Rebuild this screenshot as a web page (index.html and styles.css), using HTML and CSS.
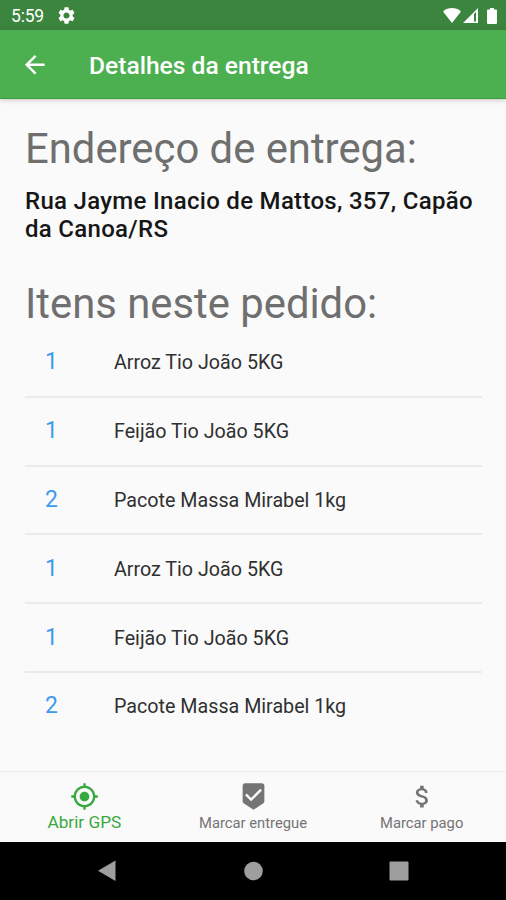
FILE: index.html
```html
<!DOCTYPE html>
<html lang="pt-BR">
<head>
<meta charset="utf-8">
<title>Detalhes da entrega</title>
<link rel="stylesheet" href="styles.css">
</head>
<body>
<div class="screen">
  <div class="status">
    <span class="clock">5:59</span>
    <svg class="gear" viewBox="2 2 20 20"><path d="M19.14 12.94c.04-.3.06-.61.06-.94 0-.32-.02-.64-.07-.94l2.03-1.58c.18-.14.23-.41.12-.61l-1.92-3.32c-.12-.22-.37-.29-.59-.22l-2.39.96c-.5-.38-1.03-.7-1.62-.94L14.4 2.81c-.04-.24-.24-.41-.48-.41h-3.84c-.24 0-.43.17-.47.41l-.36 2.54c-.59.24-1.13.57-1.62.94l-2.39-.96c-.22-.08-.47 0-.59.22L2.74 8.87c-.12.21-.08.47.12.61l2.03 1.58c-.05.3-.09.63-.09.94s.02.64.07.94l-2.03 1.58c-.18.14-.23.41-.12.61l1.92 3.32c.12.22.37.29.59.22l2.39-.96c.5.38 1.03.7 1.62.94l.36 2.54c.05.24.24.41.48.41h3.84c.24 0 .44-.17.47-.41l.36-2.54c.59-.24 1.13-.56 1.62-.94l2.39.96c.22.08.47 0 .59-.22l1.92-3.32c.12-.22.07-.47-.12-.61l-2.01-1.58zM12 15.6c-1.98 0-3.6-1.62-3.6-3.6s1.62-3.6 3.6-3.6 3.6 1.62 3.6 3.6-1.62 3.6-3.6 3.6z"/></svg>
    <span class="spacer"></span>
    <svg class="wifi" viewBox="0 0 18 15"><path d="M0 3.4C5.4-1 12.600-1 18 3.400L9 15z"/></svg>
    <svg class="signal" viewBox="0 0 15 15"><path fill-rule="evenodd" d="M15 0v15H0zM11 6v7.500h2V4z"/></svg>
    <svg class="battery" viewBox="0 0 10 16"><path d="M3 0h4v1.600h2q1 0 1 1V15q0 1-1 1H1q-1 0-1-1V2.600q0-1 1-1h2z"/></svg>
  </div>
  <header class="appbar">
    <svg class="back" viewBox="0 0 24 24"><path d="M20 11H7.830l5.590-5.590L12 4l-8 8 8 8 1.410-1.410L7.830 13H20v-2z"/></svg>
    <h1>Detalhes da entrega</h1>
  </header>
  <main>
    <h2 class="h-address">Endereço de entrega:</h2>
    <p class="address">Rua Jayme Inacio de Mattos, 357, Capão<br>da Canoa/RS</p>
    <h2 class="h-items">Itens neste pedido:</h2>
    <ul>
      <li><span class="qty">1</span><span>Arroz Tio João 5KG</span></li>
      <li><span class="qty">1</span><span>Feijão Tio João 5KG</span></li>
      <li><span class="qty">2</span><span>Pacote Massa Mirabel 1kg</span></li>
      <li><span class="qty">1</span><span>Arroz Tio João 5KG</span></li>
      <li><span class="qty">1</span><span>Feijão Tio João 5KG</span></li>
      <li><span class="qty">2</span><span>Pacote Massa Mirabel 1kg</span></li>
    </ul>
  </main>
  <nav class="tabs">
    <div class="tab active">
      <svg viewBox="0 0 24 24"><path d="M12 8c-2.210 0-4 1.790-4 4s1.790 4 4 4 4-1.790 4-4-1.790-4-4-4zm8.940 3c-.46-4.170-3.770-7.480-7.940-7.940V1h-2v2.060C6.830 3.520 3.520 6.830 3.060 11H1v2h2.060c.46 4.170 3.770 7.480 7.940 7.940V23h2v-2.060c4.170-.46 7.480-3.770 7.940-7.940H23v-2h-2.060zM12 19c-3.870 0-7-3.130-7-7s3.130-7 7-7 7 3.130 7 7-3.130 7-7 7z"/></svg>
      <span>Abrir GPS</span>
    </div>
    <div class="tab">
      <svg viewBox="0 0 24 24"><path d="M19 1H5c-1.100 0-1.990.9-1.990 2L3 15.930c0 .69.35 1.300.88 1.660L12 23l8.110-5.410c.53-.36.88-.97.88-1.660L21 3c0-1.100-.9-2-2-2zm-9 15l-5-5 1.410-1.410L10 13.170l7.590-7.590L19 7l-9 9z"/></svg>
      <span>Marcar entregue</span>
    </div>
    <div class="tab">
      <svg viewBox="0 0 24 24"><path d="M11.800 10.900c-2.270-.59-3-1.200-3-2.150 0-1.090 1.010-1.850 2.700-1.850 1.780 0 2.440.85 2.500 2.100h2.210c-.07-1.720-1.120-3.300-3.210-3.810V3h-3v2.160c-1.940.42-3.500 1.680-3.500 3.610 0 2.310 1.910 3.460 4.700 4.130 2.500.6 3 1.480 3 2.410 0 .69-.49 1.790-2.700 1.790-2.060 0-2.870-.92-2.980-2.100h-2.200c.12 2.190 1.760 3.420 3.680 3.830V21h3v-2.150c1.950-.37 3.500-1.500 3.500-3.550 0-2.840-2.430-3.810-4.700-4.400z"/></svg>
      <span>Marcar pago</span>
    </div>
  </nav>
  <div class="sysnav">
    <div><svg viewBox="0 0 20 22"><path d="M18.500.5v20.500L1 10.800z"/></svg></div>
    <div><svg viewBox="0 0 20 22"><circle cx="10.500" cy="11" r="9.300"/></svg></div>
    <div><svg viewBox="0 0 20 22"><rect x=".5" y="1.500" width="19" height="19" rx="1"/></svg></div>
  </div>
</div>
</body>
</html>
```
FILE: styles.css
```css
* { box-sizing: border-box; margin: 0; padding: 0; }
body { font-family: Roboto, "Liberation Sans", sans-serif; background: #fafafa; }
svg { display: block; flex: none; fill: currentColor; }
.screen { width: 506px; height: 900px; display: flex; flex-direction: column; overflow: hidden; }
.status { height: 30px; flex: none; background: #3b853e; color: #fff; display: flex; align-items: center; padding: 1px 9px 0 11px; }
.clock { font-size: 17.500px; font-weight: 400; letter-spacing: -.2px; width: 47px; }
.gear { width: 17px; height: 17px; }
.spacer { flex: 1; }
.wifi { width: 18px; height: 15px; }
.signal { width: 15px; height: 15px; margin: 0 9px 0 2px; }
.battery { width: 10px; height: 16px; }
.appbar { height: 69px; flex: none; background: #4caf50; border-bottom: 1px solid #35a03c; color: #fff; display: flex; align-items: center; padding: 0 20px; box-shadow: 0 1px 5px rgba(60, 20, 40, .25); }
.back { width: 29.500px; height: 29.500px; margin-top: 1px; }
h1 { font-size: 24.600px; font-weight: 500; line-height: 30px; margin: 3px 0 0 39.500px; }
main { flex: 1; min-height: 0; padding: 25px 24px 0 25px; }
h2 { font-size: 41.800px; font-weight: 400; line-height: 50px; color: #6f6f6f; }
.address { font-size: 24px; font-weight: 500; line-height: 28px; letter-spacing: .3px; color: #161616; margin-top: 13px; white-space: nowrap; }
.h-items { margin-top: 36px; }
ul { list-style: none; }
li { height: 68.800px; display: flex; align-items: center; border-bottom: 2px solid #ebebeb; font-size: 19.700px; color: #303030; padding-top: 1px; }
li:last-child { border-color: transparent; }
.qty { width: 89px; padding-left: 20px; color: #3d9bee; font-size: 23px; margin-top: -2px; }
.tabs { height: 71px; flex: none; border-top: 1px solid #ededed; display: flex; padding-bottom: 1px; }
.tab { flex: 1; display: flex; flex-direction: column; align-items: center; padding-top: 10px; color: #747474; font-size: 14.770px; line-height: 20px; }
.tab svg { width: 29px; height: 29px; }
.tab:last-child svg { margin-left: 1px; }
.tab span { margin-top: 2px; }
.active { color: #38a93e; font-size: 17.230px; }
.active span { margin-top: 1px; }
.sysnav { height: 58px; flex: none; background: #000; color: #9e9e9e; display: flex; justify-content: center; }
.sysnav div { width: 146px; display: flex; justify-content: center; align-items: center; }
.sysnav svg { width: 20px; height: 22px; }
```
